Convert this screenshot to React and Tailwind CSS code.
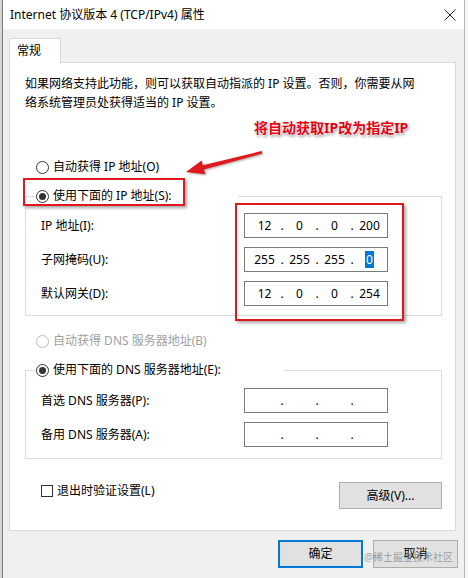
import React from 'react'

function Radio({ checked, disabled, label }) {
  return (
    <div className="flex items-center h-[18px]">
      <span
        className={`w-[13px] h-[13px] rounded-full border bg-white flex items-center justify-center ${
          disabled ? 'border-[#bcbcbc]' : 'border-[#333333]'
        }`}
      >
        {checked && <span className="w-[7px] h-[7px] rounded-full bg-[#333333]" />}
      </span>
      <span className={`ml-[4px] whitespace-nowrap ${disabled ? 'text-[#a0a0a0]' : 'text-black'}`}>{label}</span>
    </div>
  )
}

function IpField({ parts = ['', '', '', ''], sel = -1 }) {
  return (
    <div className="w-[144px] h-[25px] border border-[#7a7a7a] bg-white flex items-center pl-[4px]">
      {parts.map((p, i) => (
        <React.Fragment key={i}>
          {i > 0 && <span className="w-[4px] text-center">.</span>}
          <span className="w-[31px] text-center">
            {i === sel ? <span className="bg-[#0078d7] text-white px-[1px]">{p}</span> : p}
          </span>
        </React.Fragment>
      ))}
    </div>
  )
}

function Row({ label, parts, sel }) {
  return (
    <div className="flex items-center h-[25px]">
      <span className="w-[203px] whitespace-nowrap">{label}</span>
      <IpField parts={parts} sel={sel} />
    </div>
  )
}

export default function App() {
  return (
    <div className="w-[468px] h-[578px] flex bg-white overflow-hidden text-[12px] text-black font-[Noto_Sans,Noto_Sans_CJK_SC,sans-serif]">
      {/* left edge of the screen behind */}
      <div className="w-[3px] h-full bg-[#d6d6d6] border-r border-[#777777]" />

      <div className="w-[462px] h-full flex flex-col border-r border-[#b5b5b5] relative">
        {/* title bar */}
        <div className="h-[29px] bg-white flex items-center justify-between pl-[7px] pr-[8px]">
          <span className="text-[12px]">Internet 协议版本 4 (TCP/IPv4) 属性</span>
          <svg width="12" height="12" viewBox="0 0 12 12">
            <path d="M0.5 0.5 L11.5 11.5 M11.5 0.5 L0.5 11.5" stroke="#222" strokeWidth="1" />
          </svg>
        </div>

        {/* dialog body */}
        <div className="flex-1 bg-[#f0f0f0] pl-[6px] flex flex-col">
          <div className="mt-[9px] w-[52px] h-[25px] -mb-[1px] relative z-10 bg-white border border-b-0 border-[#d9d9d9] pl-[7px] flex items-center">
            常规
          </div>

          <div className="w-[447px] h-[469px] bg-white border border-[#d9d9d9] relative flex flex-col">
            <p className="pl-[15px] pt-[11px] leading-[19px] whitespace-nowrap">
              如果网络支持此功能，则可以获取自动指派的 IP 设置。否则，你需要从网
              <br />
              络系统管理员处获得适当的 IP 设置。
            </p>

            <div className="ml-[26px] mt-[46px]">
              <Radio label="自动获得 IP 地址(O)" />
            </div>

            <fieldset className="ml-[15px] w-[417px] mt-[11px] border border-[#dcdcdc]">
              <legend className="ml-[10px] w-[202px] bg-white">
                <Radio checked label="使用下面的 IP 地址(S):" />
              </legend>
              <div className="pl-[15px] pt-[8px] pb-[9px] flex flex-col gap-[9px]">
                <Row label="IP 地址(I):" parts={['12', '0', '0', '200']} />
                <Row label="子网掩码(U):" parts={['255', '255', '255', '0']} sel={3} />
                <Row label="默认网关(D):" parts={['12', '0', '0', '254']} />
              </div>
            </fieldset>

            <div className="ml-[26px] mt-[16px]">
              <Radio disabled label="自动获得 DNS 服务器地址(B)" />
            </div>

            <fieldset className="ml-[15px] w-[417px] mt-[11px] border border-[#dcdcdc]">
              <legend className="ml-[10px] w-[248px] bg-white">
                <Radio checked label="使用下面的 DNS 服务器地址(E):" />
              </legend>
              <div className="pl-[15px] pt-[9px] pb-[11px] flex flex-col gap-[9px]">
                <Row label="首选 DNS 服务器(P):" />
                <Row label="备用 DNS 服务器(A):" />
              </div>
            </fieldset>

            <div className="mt-[23px] ml-[31px] mr-[13px] flex items-start justify-between">
              <div className="flex items-center h-[18px]">
                <span className="w-[12px] h-[12px] border border-[#333333] bg-white" />
                <span className="ml-[4px]">退出时验证设置(L)</span>
              </div>
              <button className="w-[103px] h-[27px] bg-[#e1e1e1] border border-[#adadad] text-[12px]">
                高级(V)...
              </button>
            </div>

            {/* annotations */}
            <div className="absolute left-[13px] top-[115px] w-[162px] h-[28px] border-2 border-[#e0191e] shadow-[2px_2px_3px_rgba(0,0,0,0.35)]" />
            <div className="absolute left-[225px] top-[140px] w-[169px] h-[118px] border-2 border-[#e0191e] shadow-[2px_2px_3px_rgba(0,0,0,0.35)]" />
            <div className="absolute left-[244px] top-[55px] h-[20px] leading-[20px] text-[14px] font-bold text-[#e60012] whitespace-nowrap [text-shadow:0_0_2px_#fff,0_0_2px_#fff,1px_2px_3px_rgba(0,0,0,0.45)]">
              将自动获取IP改为指定IP
            </div>
            <svg
              className="absolute left-[170px] top-[82px] drop-shadow-[1px_1px_1px_rgba(0,0,0,0.35)]"
              width="90"
              height="35"
              viewBox="0 0 90 35"
            >
              <polygon
                points="6,27 21.6,15.6 22.8,20.3 81.7,6 82.3,8.5 24,24.5 25.2,29.2"
                fill="#e0191e"
              />
            </svg>
          </div>

          <div className="mt-[9px] pr-[6px] flex justify-end gap-[10px]">
            <button className="w-[85px] h-[28px] bg-[#e1e1e1] border-2 border-[#0078d7] text-[12px]">确定</button>
            <button className="w-[85px] h-[28px] bg-[#e1e1e1] border border-[#adadad] text-[12px]">取消</button>
          </div>
        </div>

        <div className="absolute left-[361px] top-[550px] text-[10px] leading-[14px] text-[rgba(130,130,130,0.75)] whitespace-nowrap">
          @稀土掘金技术社区
        </div>
      </div>
      <div className="flex-1 bg-[#f8f8f8]" />
    </div>
  )
}
